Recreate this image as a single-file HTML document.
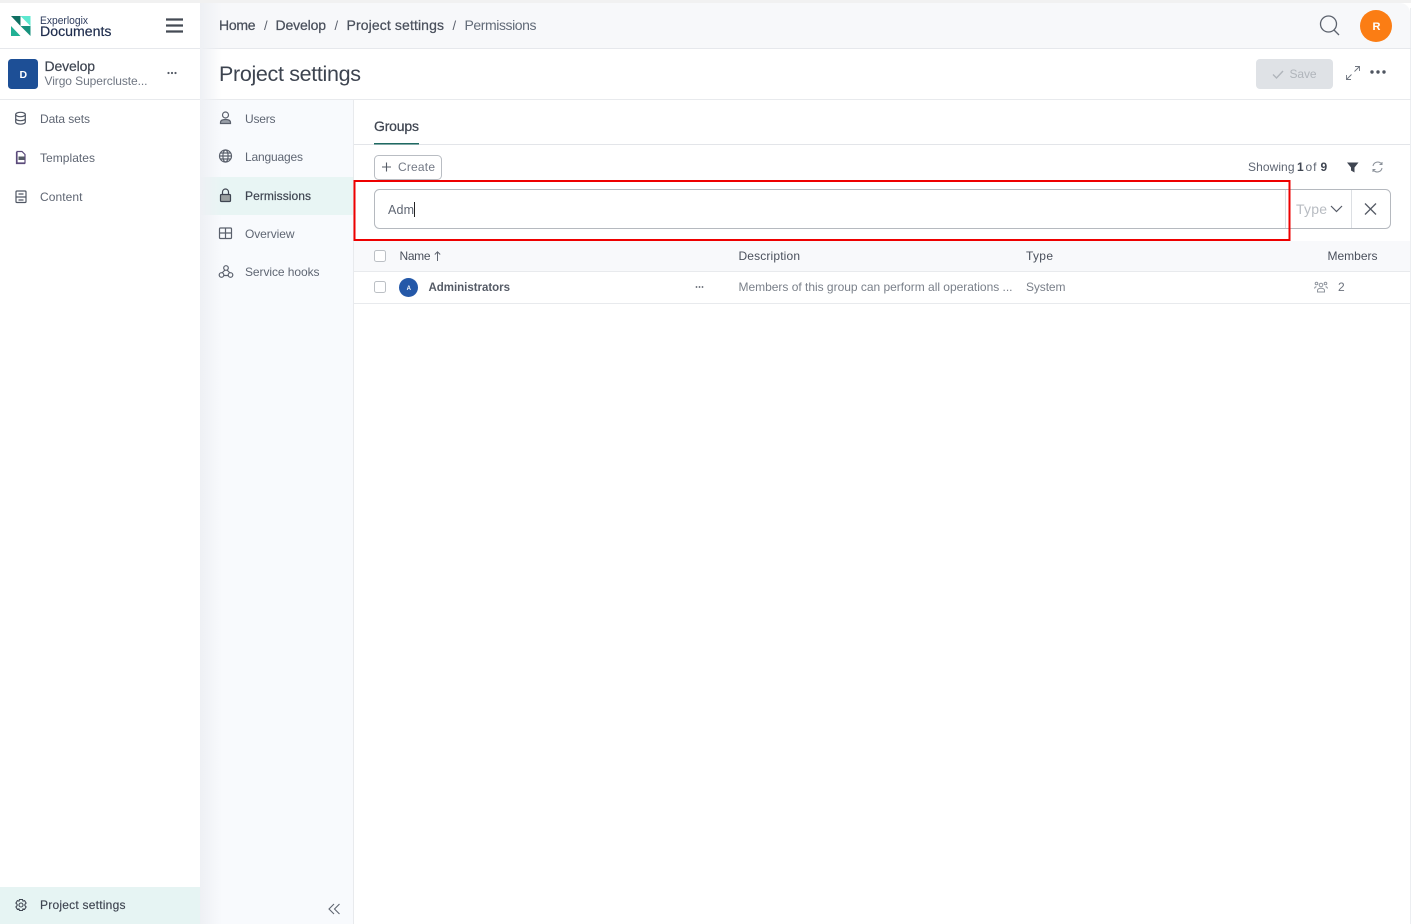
<!DOCTYPE html>
<html lang="en">
<head>
<meta charset="utf-8">
<title>Project settings</title>
<style>
html,body{margin:0;padding:0;background:#fff;width:1411px;height:924px;overflow:hidden}
svg{display:block;position:absolute;left:0;top:0}
text{font-family:"Liberation Sans",sans-serif;font-size:12px;fill:#5f6673}
</style>
</head>
<body>
<svg width="1411" height="924" viewBox="0 0 1411 924" xmlns="http://www.w3.org/2000/svg">
<defs>
<linearGradient id="sh" x1="0" x2="1" y1="0" y2="0"><stop offset="0" stop-color="#eef0f4"/><stop offset="1" stop-color="#eef0f4" stop-opacity="0"/></linearGradient>
</defs>
<rect width="1411" height="924" fill="#fff"/>
<rect width="1411" height="3" fill="#f1f1f1"/>
<!-- top bar -->
<path d="M200 3H1400a10 10 0 0 1 10 10V48H200Z" fill="#f7f8fa"/>
<rect x="1410" y="8" width="1" height="916" fill="#eceef1"/>
<rect x="200" y="48" width="1211" height="1" fill="#e6e8ec"/>
<rect x="0" y="48" width="200" height="1" fill="#e6e8ec"/>
<rect x="0" y="99" width="1411" height="1" fill="#e8eaed"/>
<!-- second nav -->
<rect x="200" y="100" width="153" height="824" fill="#f8fafd"/>
<rect x="353" y="100" width="1" height="824" fill="#e8eaed"/>
<rect x="200" y="177" width="153" height="38" fill="#e8f5f4"/>
<rect x="200" y="3" width="22" height="921" fill="url(#sh)"/>
<rect x="0" y="887" width="200" height="37" fill="#e6f4f3"/>

<!-- logo -->
<path d="M11 16H20.500V26Z" fill="#0f6f62"/>
<path d="M20.500 16H30.500V26Z" fill="#5de8cf"/>
<path d="M11 26V36H20.500Z" fill="#21b094"/>
<path d="M20.500 26H30.500V36Z" fill="#16917c"/>
<text x="40" y="24" textLength="48" lengthAdjust="spacingAndGlyphs" style="font-size:11px;fill:#2f3d5e">Experlogix</text>
<text x="40" y="36" textLength="71.500" lengthAdjust="spacingAndGlyphs" style="font-size:13.500px;fill:#1f2d4d;stroke:#1f2d4d;stroke-width:.2">Documents</text>
<path d="M166 19.500H183M166 25.500H183M166 31.500H183" stroke="#444a54" stroke-width="2.200" fill="none"/>

<!-- project -->
<rect x="8" y="59" width="30" height="30" rx="3.500" fill="#1d4f96"/>
<text x="19.500" y="78" style="font-size:10.500px;font-weight:700;fill:#fff">D</text>
<text x="44.500" y="71" textLength="50.500" style="font-size:14px;fill:#3e4551;stroke:#3e4551;stroke-width:.2">Develop</text>
<text x="44.500" y="85" textLength="103" style="font-size:12px;fill:#6f7682">Virgo Supercluste...</text>
<g fill="#555b66"><circle cx="168.500" cy="73" r="1.100"/><circle cx="172" cy="73" r="1.100"/><circle cx="175.500" cy="73" r="1.100"/></g>

<!-- main nav icons -->
<g fill="none" stroke="#4f5663" stroke-width="1.200">
<ellipse cx="20.500" cy="114.500" rx="4.800" ry="2.200"/>
<path d="M15.700 114.500V122c0 1.300 2.100 2.200 4.800 2.200s4.800-.9 4.800-2.200V114.500M15.700 118.500c0 1.300 2.100 2.200 4.800 2.200s4.800-.9 4.800-2.200"/>
<path d="M17 151.500h5l3 3v8.500H17ZM16.500 152v11.500h8.500" stroke="#5a4a7a"/>
<rect x="16" y="191" width="10" height="11.500" rx="1"/>
<path d="M16 197H26M18.500 194H23.500M18.500 200H23.500"/>
</g>
<rect x="18.500" y="156.500" width="6" height="3.500" fill="#555b66"/>
<text x="40" y="123" textLength="50">Data sets</text>
<text x="40" y="162" textLength="55">Templates</text>
<text x="40" y="201" textLength="42.500">Content</text>

<!-- bottom settings -->
<g fill="none" stroke="#3f4551" stroke-width="1.100">
<circle cx="21" cy="905" r="2"/>
<path d="M19.500 899.500h3l.5 1.600 1.600-.5 1.500 2.500-1.200 1.200v1.400l1.200 1.200-1.500 2.500-1.600-.5-.5 1.600h-3l-.5-1.600-1.600.5-1.500-2.500 1.200-1.200v-1.400l-1.200-1.200 1.500-2.500 1.600.5Z"/>
</g>
<text x="40" y="909" textLength="85.500" style="fill:#3f4551;stroke:#3f4551;stroke-width:.15">Project settings</text>

<!-- breadcrumbs -->
<text x="219" y="30" textLength="36.500" style="font-size:14px;fill:#4a505c;stroke:#4a505c;stroke-width:.25">Home</text>
<text x="264" y="30" style="font-size:13px;fill:#5a606c">/</text>
<text x="275.500" y="30" textLength="50.500" style="font-size:14px;fill:#4a505c;stroke:#4a505c;stroke-width:.25">Develop</text>
<text x="334.500" y="30" style="font-size:13px;fill:#5a606c">/</text>
<text x="346.500" y="30" textLength="97.500" style="font-size:14px;fill:#4a505c;stroke:#4a505c;stroke-width:.25">Project settings</text>
<text x="452.500" y="30" style="font-size:13px;fill:#5a606c">/</text>
<text x="464.500" y="30" textLength="72" style="font-size:14px;fill:#626b78">Permissions</text>
<!-- search + avatar -->
<g fill="none" stroke="#5c626d" stroke-width="1.300"><circle cx="1328.500" cy="24" r="8"/><path d="M1334 30L1339 35"/></g>
<circle cx="1376" cy="26" r="16" fill="#fb7d14"/>
<text x="1372.500" y="30" style="font-size:11px;font-weight:700;fill:#fff">R</text>

<!-- title -->
<text x="219" y="81" textLength="142" style="font-size:21.500px;fill:#3d4450">Project settings</text>
<rect x="1256" y="59" width="77" height="30" rx="4" fill="#dfe2e6"/>
<path d="M1273 74.500l3.500 3.500 6.500-7" fill="none" stroke="#b0b5bb" stroke-width="1.400"/>
<text x="1289.500" y="78" textLength="27" style="fill:#b0b5bb">Save</text>
<g fill="none" stroke="#6f757f" stroke-width=".9"><path d="M1354.500 71.500L1359.500 66.500M1355 66.500H1359.500V71M1351.500 74.500L1346.500 79.500M1346.500 75V79.500H1351"/></g>
<g fill="#4f5560"><circle cx="1372" cy="72" r="1.700"/><circle cx="1378" cy="72" r="1.700"/><circle cx="1384" cy="72" r="1.700"/></g>

<!-- sub nav -->
<g fill="none" stroke="#5a606c" stroke-width="1.200">
<circle cx="225.500" cy="115" r="3"/>
<path d="M220.500 123.500v-1c0-1.800 1.800-3 5-3s5 1.200 5 3v1Z" fill="#9aa0a9"/>
<circle cx="225.500" cy="156" r="6"/>
<ellipse cx="225.500" cy="156" rx="2.600" ry="6"/>
<path d="M219.500 156H231.500M220.500 153H230.500M220.500 159H230.500"/>
<rect x="220.500" y="194.500" width="10" height="7" rx="1" stroke="#3f4551" fill="#9aa0a0"/>
<path d="M222.500 194.500v-2.500a3 3 0 0 1 6 0v2.500" stroke="#3f4551"/>
<rect x="219.500" y="228" width="12" height="10.500" rx="1"/>
<path d="M225.500 228v10.500M219.500 233H231.500"/>
<circle cx="226" cy="268" r="2.300"/><circle cx="221.500" cy="275" r="2.300"/><circle cx="230.500" cy="275" r="2.300"/>
<path d="M225 270l-3 3M227 270l3 3M224 275.500h4"/>
</g>
<text x="245" y="123" textLength="30.500">Users</text>
<text x="245" y="161" textLength="58">Languages</text>
<text x="245" y="200" textLength="66" style="fill:#3f4551;stroke:#3f4551;stroke-width:.2">Permissions</text>
<text x="245" y="238" textLength="49.500">Overview</text>
<text x="245" y="276" textLength="74.500">Service hooks</text>
<path d="M334 904l-5 5 5 5M339.500 904l-5 5 5 5" fill="none" stroke="#5f6570" stroke-width="1.100"/>

<!-- tabs -->
<text x="374" y="131" textLength="45" style="font-size:14px;fill:#3f4551;stroke:#3f4551;stroke-width:.25">Groups</text>
<rect x="354" y="144" width="1056" height="1" fill="#e3e5e9"/>
<rect x="374" y="143" width="45" height="1.500" fill="#1f6a62"/>

<!-- toolbar -->
<rect x="374.500" y="155.500" width="67" height="24" rx="4" fill="#fff" stroke="#b9bdc3"/>
<path d="M382 167H391M386.500 162.500V171.500" stroke="#555b66" stroke-width="1.100" fill="none"/>
<text x="398" y="171" textLength="37" style="fill:#737985">Create</text>
<text x="1248" y="171" textLength="46.500" style="fill:#5f6673">Showing</text>
<text x="1297" y="171" style="fill:#3f4551;font-weight:700">1</text>
<text x="1305.500" y="171" textLength="11" style="fill:#5f6673">of</text>
<text x="1320.500" y="171" style="fill:#3f4551;font-weight:700">9</text>
<path d="M1347 162.500H1358.500L1354.500 167.500V172.500L1351 170.500V167.500Z" fill="#3f4551"/>
<g fill="none" stroke="#8a9099" stroke-width="1"><path d="M1373 166a4.800 4.800 0 0 1 8.200-2.500l.8.800M1382 168a4.800 4.800 0 0 1-8.200 2.500l-.8-.8"/><path d="M1382 162v2.500h-2.500M1373 172v-2.500h2.500"/></g>

<!-- search input -->
<rect x="374.500" y="189.500" width="1016" height="39" rx="5" fill="#fff" stroke="#b5b9bf"/>
<rect x="1285" y="190" width="1" height="38" fill="#dcdfe3"/>
<rect x="1351" y="190" width="1" height="38" fill="#dcdfe3"/>
<text x="388" y="214" textLength="26" style="font-size:12.500px;fill:#5f6673">Adm</text>
<rect x="414" y="202" width="1" height="15" fill="#222"/>
<text x="1296" y="214" textLength="31" style="font-size:14px;fill:#b8bcc2">Type</text>
<path d="M1331 206l5.500 5.500 5.500-5.500" fill="none" stroke="#555b66" stroke-width="1.200"/>
<path d="M1365 203.500L1376 214.500M1376 203.500L1365 214.500" stroke="#555b66" stroke-width="1.300" fill="none"/>

<!-- red highlight -->
<rect x="354.500" y="181" width="935" height="59" fill="none" stroke="#ee0000" stroke-width="2"/>

<!-- table -->
<rect x="354" y="241" width="1056" height="30" fill="#f8f9fb"/>
<rect x="354" y="271" width="1056" height="1" fill="#e8eaed"/>
<rect x="354" y="303" width="1056" height="1" fill="#e8eaed"/>
<rect x="374.500" y="250.500" width="11" height="11" rx="2" fill="#fff" stroke="#bcc0c5"/>
<rect x="374.500" y="281.500" width="11" height="11" rx="2" fill="#fff" stroke="#bcc0c5"/>
<text x="399.500" y="260" textLength="31" style="fill:#4a505c">Name</text>
<path d="M437.500 261V252M434.800 254.500l2.700-2.700 2.700 2.700" fill="none" stroke="#5f6570" stroke-width="1"/>
<text x="738.500" y="260" textLength="61.500" style="fill:#4a505c">Description</text>
<text x="1026" y="260" textLength="27" style="fill:#4a505c">Type</text>
<text x="1327.500" y="260" textLength="50" style="fill:#4a505c">Members</text>
<circle cx="408.500" cy="287.500" r="9.500" fill="#2458a8"/>
<text x="406.600" y="290" style="font-size:6px;font-weight:700;fill:#fff">A</text>
<text x="428.500" y="291" textLength="81.500" style="font-size:11.500px;fill:#555b66;font-weight:700">Administrators</text>
<g fill="#555b66"><circle cx="696.500" cy="287" r=".9"/><circle cx="699.500" cy="287" r=".9"/><circle cx="702.500" cy="287" r=".9"/></g>
<text x="738.500" y="291" textLength="274" style="fill:#7a808a">Members of this group can perform all operations ...</text>
<text x="1026" y="291" textLength="39.500" style="fill:#7a808a">System</text>
<g fill="none" stroke="#8f959e" stroke-width="1"><circle cx="1321" cy="285" r="1.800"/><path d="M1317.500 292v-1.500c0-1.400 1.500-2.300 3.500-2.300s3.500.9 3.500 2.300V292Z"/><circle cx="1316.500" cy="283.500" r="1.300"/><circle cx="1325.500" cy="283.500" r="1.300"/><path d="M1314.500 288.500c.3-1.200 1-1.700 2-1.700M1327.500 288.500c-.3-1.200-1-1.700-2-1.700"/></g>
<text x="1338" y="291" style="fill:#6b717c">2</text>
</svg>
</body>
</html>
